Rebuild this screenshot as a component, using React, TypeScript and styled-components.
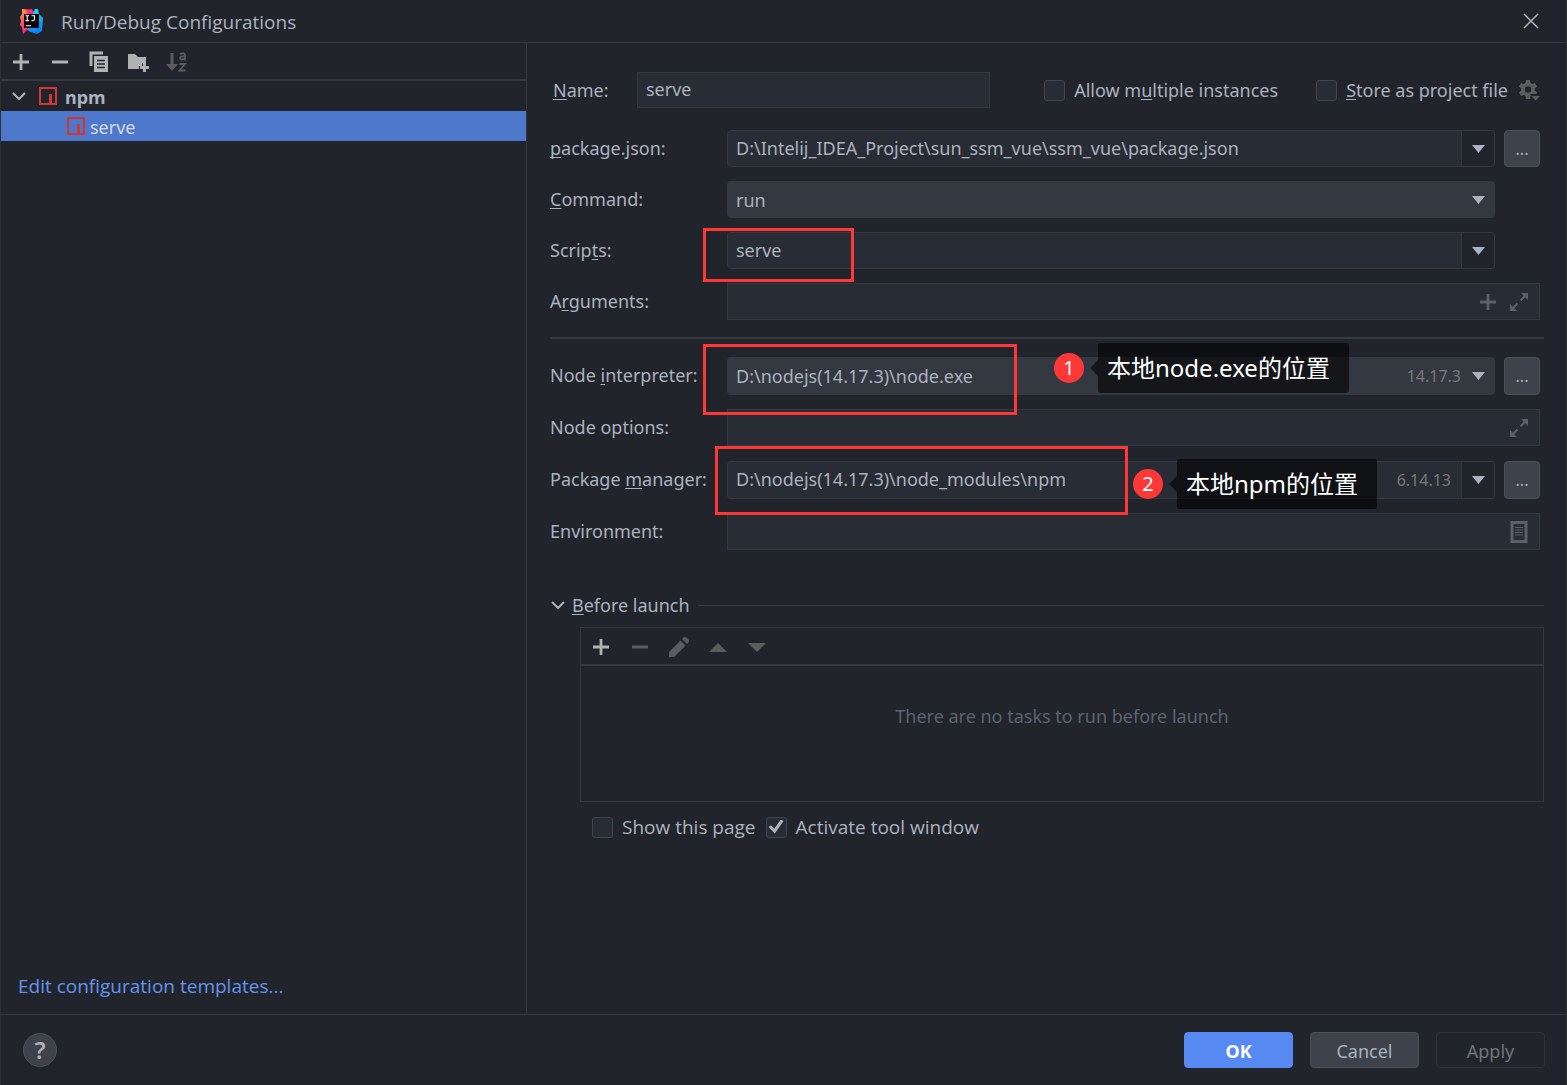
import React from "react";
import styled, { createGlobalStyle, css } from "styled-components";

const color = {
  bg: "#21252b",
  field: "#282c34",
  line: "#333841",
  raised: "#333841",
  button: "#3d424b",
  buttonLine: "#4a4f59",
  text: "#abb2bf",
  muted: "#5c6370",
  disabled: "#5a5c5f",
  icon: "#afb1b3",
  selected: "#4d78cc",
  primary: "#568af2",
  link: "#6494ed",
  mark: "#fe3837",
};

const GlobalStyle = createGlobalStyle`
  *, *::before, *::after { box-sizing: border-box; }
  body { margin: 0; background: ${color.bg}; }
  body, button, input, select {
    font-family: "Noto Sans", "Noto Sans CJK SC", sans-serif;
    font-size: 18px;
    line-height: 24px;
    color: ${color.text};
  }
  button, input, select { margin: 0; }
  svg { display: block; flex: none; }
`;

const largeText = css`
  font-family: "Open Sans", "Noto Sans CJK SC", sans-serif;
  font-size: 19px;
`;

const Dialog = styled.div`
  display: flex;
  flex-direction: column;
  min-height: 100vh;
  background: ${color.bg};
  border: 1px solid #2d2f33;
  border-width: 0 1px;
`;

const TitleBar = styled.header`
  display: flex;
  align-items: center;
  height: 43px;
  padding: 0 23px 0 16px;
  border-bottom: 1px solid ${color.line};
`;

const Title = styled.h1`
  ${largeText}
  flex: 1;
  margin: 0 0 0 16px;
  padding-top: 2px;
  font-weight: 400;
`;

const IconButton = styled.button<{ $size?: number }>`
  display: flex;
  align-items: center;
  justify-content: center;
  width: ${(p) => p.$size ?? 24}px;
  height: ${(p) => p.$size ?? 24}px;
  padding: 0;
  border: 0;
  background: none;
  color: ${color.icon};
  &:disabled { color: ${color.disabled}; }
`;

const Body = styled.main`
  display: grid;
  grid-template-columns: minmax(280px, 526px) minmax(0, 1fr);
  flex: 1;
`;

const Sidebar = styled.aside`
  display: flex;
  flex-direction: column;
  border-right: 1px solid ${color.line};
`;

const Toolbar = styled.div`
  display: flex;
  align-items: center;
  gap: 15px;
  height: 38px;
  padding: 2px 8px 0;
  border-bottom: 2px solid ${color.line};
`;

const Tree = styled.ul`
  flex: 1;
  margin: 0;
  padding: 0;
  list-style: none;
`;

const TreeRow = styled.li<{ $selected?: boolean; $level: number }>`
  display: flex;
  align-items: center;
  gap: ${(p) => (p.$level ? 5 : 8)}px;
  height: 30px;
  padding-left: ${(p) => (p.$level ? 66 : 5)}px;
  font-weight: ${(p) => (p.$level ? 400 : 700)};
  color: ${(p) => (p.$selected ? "#d7dae0" : color.text)};
  background: ${(p) => (p.$selected ? color.selected : "transparent")};
`;

const TreeText = styled.span`
  padding-top: 2px;
`;

const TemplatesLink = styled.a`
  ${largeText}
  padding: 0 17px 16px;
  color: ${color.link};
  text-decoration: none;
`;

const Editor = styled.section`
  padding: 29px 22px 24px 23px;
`;

const NameRow = styled.div`
  display: flex;
  align-items: center;
  height: 36px;
  margin-bottom: 22px;
  padding: 0 4px 0 3px;
`;

const NameLabel = styled.label`
  width: 84px;
`;

const NameInput = styled.input`
  flex: 1;
  min-width: 0;
  height: 36px;
  margin-right: 54px;
  padding: 0 8px 2px;
  border: 1px solid ${color.line};
  background: ${color.field};
  outline: 0;
`;

const Mnemonic = styled.u`
  text-underline-offset: 2px;
  text-decoration-thickness: 1px;
  text-decoration-skip-ink: none;
`;

const Check = styled.label<{ $large?: boolean }>`
  ${(p) => p.$large && largeText}
  display: inline-flex;
  align-items: center;
  gap: 9px;
  white-space: nowrap;
`;

const CheckBox = styled.input`
  appearance: none;
  display: grid;
  place-content: center;
  flex: none;
  width: 21px;
  height: 21px;
  border: 1px solid #3f4653;
  border-radius: 3px;
  background: ${color.field};
  &:checked::before {
    content: "";
    width: 15px;
    height: 15px;
    background: ${color.text};
    clip-path: polygon(0 50%, 16% 38%, 38% 62%, 82% 0, 100% 10%, 42% 94%);
  }
`;

const StoreGroup = styled.div`
  display: flex;
  align-items: center;
  gap: 10px;
  margin-left: 38px;
`;

const Rows = styled.div<{ $rowHeight: number }>`
  display: grid;
  grid-auto-rows: ${(p) => p.$rowHeight}px;
  row-gap: 14px;
  padding-right: 4px;
`;

const Row = styled.div`
  display: grid;
  grid-template-columns: 177px minmax(0, 1fr) 36px;
  align-items: stretch;
`;

const RowLabel = styled.label`
  align-self: center;
  padding-bottom: 2px;
  white-space: nowrap;
`;

const Cell = styled.div<{ $wide?: boolean }>`
  position: relative;
  display: flex;
  grid-column: ${(p) => (p.$wide ? "2 / 4" : "2")};
  margin-right: ${(p) => (p.$wide ? 0 : 9)}px;
`;

const Frame = styled.div<{ $square?: boolean; $raised?: boolean }>`
  display: flex;
  flex: 1;
  align-items: center;
  height: ${(p) => (p.$square ? "37px" : "auto")};
  min-width: 0;
  overflow: hidden;
  border: 1px solid ${color.line};
  border-radius: ${(p) => (p.$square ? 0 : 4)}px;
  background: ${(p) => (p.$raised ? color.raised : color.field)};
`;

const Text = styled.input`
  flex: 1;
  min-width: 0;
  align-self: stretch;
  padding: 0 8px 2px;
  border: 0;
  background: none;
  outline: 0;
`;

const Select = styled.select`
  appearance: none;
  flex: 1;
  min-width: 0;
  align-self: stretch;
  padding: 0 8px;
  border: 0;
  background: none;
  outline: 0;
`;

const Version = styled.span<{ $tight?: boolean }>`
  padding-right: ${(p) => (p.$tight ? 0 : 10)}px;
  font-size: 16px;
  color: #787878;
`;

const DropButton = styled.button<{ $plain?: boolean }>`
  display: flex;
  align-items: center;
  justify-content: center;
  align-self: stretch;
  width: 33px;
  padding: 0;
  border: 0;
  border-left: 1px solid ${(p) => (p.$plain ? "transparent" : color.line)};
  background: ${(p) => (p.$plain ? "none" : color.bg)};
`;

const FieldIcons = styled.div`
  display: flex;
  gap: 7px;
  padding-right: 8px;
`;

const FieldIcon = styled(IconButton)`
  color: #5a6169;
`;

const Browse = styled.button`
  padding: 0;
  border: 1px solid ${color.buttonLine};
  border-radius: 4px;
  background: ${color.button};
  font-size: 16px;
`;

const Divider = styled.hr`
  height: 2px;
  margin: 17px 0 18px;
  border: 0;
  background: ${color.line};
`;

const Marker = styled.div<{ $x: number; $y: number; $w: number; $h: number }>`
  position: absolute;
  z-index: 2;
  left: ${(p) => p.$x}px;
  top: ${(p) => p.$y}px;
  width: ${(p) => p.$w}px;
  height: ${(p) => p.$h}px;
  border: 3px solid ${color.mark};
  pointer-events: none;
`;

const Callout = styled.div<{ $x: number; $y: number }>`
  position: absolute;
  z-index: 2;
  left: ${(p) => p.$x}px;
  top: ${(p) => p.$y}px;
  display: flex;
  align-items: center;
  height: 50px;
  white-space: nowrap;
`;

const Badge = styled.span`
  width: 30px;
  height: 30px;
  margin-right: 6px;
  border-radius: 50%;
  background: ${color.mark};
  color: #fff;
  font-size: 20px;
  line-height: 29px;
  text-align: center;
`;

const Pointer = styled.span`
  width: 8px;
  height: 16px;
  background: rgba(0, 0, 0, 0.6);
  clip-path: polygon(100% 0, 100% 100%, 0 50%);
`;

const Tip = styled.span`
  height: 50px;
  padding: 0 19px 0 9px;
  border-radius: 3px;
  background: rgba(0, 0, 0, 0.6);
  color: #fff;
  font-size: 24px;
  line-height: 50px;
`;

const LaunchHead = styled.h2`
  display: flex;
  align-items: center;
  gap: 8px;
  margin: 42px 0 10px;
  font-size: 18px;
  font-weight: 400;
  &::after {
    content: "";
    flex: 1;
    height: 1px;
    background: ${color.line};
  }
`;

const FoldButton = styled.button`
  display: flex;
  align-items: center;
  gap: 6px;
  padding: 0;
  border: 0;
  background: none;
`;

const TaskPanel = styled.div`
  display: flex;
  flex-direction: column;
  height: 175px;
  margin-left: 30px;
  border: 1px solid ${color.line};
`;

const EmptyNote = styled.p`
  margin: 38px 0 0;
  text-align: center;
  color: ${color.muted};
`;

const Options = styled.div`
  display: flex;
  gap: 10px;
  margin: 13px 0 0 42px;
`;

const Footer = styled.footer`
  display: flex;
  align-items: center;
  gap: 17px;
  height: 71px;
  padding: 0 21px 0 22px;
  border-top: 1px solid ${color.line};
`;

const Help = styled.button`
  width: 34px;
  height: 34px;
  margin-right: auto;
  padding: 0;
  border: 1px solid ${color.buttonLine};
  border-radius: 50%;
  background: ${color.button};
  color: ${color.icon};
  font-size: 24px;
  font-weight: 600;
  line-height: 32px;
`;

const Action = styled.button<{ $primary?: boolean }>`
  width: 109px;
  height: 36px;
  padding: 2px 0 0;
  border: 1px solid ${(p) => (p.$primary ? color.primary : color.buttonLine)};
  border-radius: 4px;
  background: ${(p) => (p.$primary ? color.primary : color.button)};
  color: ${(p) => (p.$primary ? "#fff" : color.text)};
  font-weight: ${(p) => (p.$primary ? 700 : 400)};
  &:disabled {
    border-color: #2f3338;
    background: none;
    color: #727375;
  }
`;

const Logo = () => (
  <svg width="28" height="28" viewBox="0 0 28 28" aria-hidden="true">
    <defs>
      <linearGradient id="warm" x1="0" y1="0" x2="0.3" y2="1">
        <stop offset="0" stopColor="#ffb02e" />
        <stop offset="0.45" stopColor="#fc5f5f" />
        <stop offset="1" stopColor="#fe2283" />
      </linearGradient>
      <linearGradient id="cool" x1="0.4" y1="0" x2="0.6" y2="1">
        <stop offset="0" stopColor="#1fd3f5" />
        <stop offset="1" stopColor="#087cfa" />
      </linearGradient>
    </defs>
    <path d="M5 2l9 1v21l-4-1-4 4-1-7-2-2 1-4-1-4 2-3z" fill="url(#warm)" />
    <path d="M9 3l6-1 2 4-6 3z" fill="#fe2d78" />
    <path d="M18 2l3 0 1 5 4 4-1 13-5 3-9-3 3-14z" fill="url(#cool)" />
    <rect x="7" y="7" width="15" height="14" fill="#0b0608" />
    <path d="M8.500 8.800h3.500M10.200 8.800v5M8.500 13.600h3.500M14.500 8.800h3v3.200q0 1.600-1.600 1.600h-1.400M9 18.700h5" fill="none" stroke="#fff" strokeWidth="1.100" />
  </svg>
);

const CloseIcon = () => (
  <svg width="16" height="16" viewBox="0 0 16 16" aria-hidden="true">
    <path d="M1 1l14 14M15 1L1 15" stroke="#b4b4b0" strokeWidth="1.500" />
  </svg>
);

const PlusIcon = () => (
  <svg width="16" height="16" viewBox="0 0 16 16" aria-hidden="true">
    <path d="M8 0v16M0 8h16" stroke="currentColor" strokeWidth="2.800" />
  </svg>
);

const MinusIcon = () => (
  <svg width="16" height="16" viewBox="0 0 16 16" aria-hidden="true">
    <path d="M0 8h16" stroke="currentColor" strokeWidth="3" />
  </svg>
);

const CopyIcon = () => (
  <svg width="20" height="22" viewBox="0 0 20 22" aria-hidden="true">
    <path d="M2 15V2h12" fill="none" stroke="currentColor" strokeWidth="3" />
    <path d="M5 5h14v16H5z" fill="currentColor" />
    <path d="M8 9.500h8M8 13h8M8 16.500h8" stroke={color.bg} strokeWidth="1.400" />
  </svg>
);

const FolderIcon = () => (
  <svg width="22" height="22" viewBox="0 0 22 22" aria-hidden="true">
    <path d="M1 3h7l3 3h8v6h-4v3h-3v3H1z" fill="currentColor" />
    <path d="M17.500 12v9M13 16.500h9" stroke="currentColor" strokeWidth="3" />
  </svg>
);

const SortIcon = () => (
  <svg width="22" height="22" viewBox="0 0 22 22" aria-hidden="true">
    <path d="M6 2v13" stroke="currentColor" strokeWidth="3" />
    <path d="M0 13h12l-6 7z" fill="currentColor" />
    <path d="M14 3q5-2 5 1.500v5M19 5.500q-5-0.500-5 1.500t2.500 1.500q2-0.200 2.500-1.500M13.500 13h5.500l-5.500 6.500h6" fill="none" stroke="currentColor" strokeWidth="1.800" />
  </svg>
);

const FoldIcon = () => (
  <svg width="16" height="16" viewBox="0 0 16 16" aria-hidden="true">
    <path d="M2 5l6 6 6-6" fill="none" stroke={color.icon} strokeWidth="2" />
  </svg>
);

const NpmIcon = () => (
  <svg width="18" height="18" viewBox="0 0 18 18" aria-hidden="true">
    <path d="M1 1h16v16H1z" fill="none" stroke="#cb3837" strokeWidth="2" />
    <path d="M10 7h3v9h-3z" fill="#cb3837" />
  </svg>
);

const Triangle = ({ up, wide }: { up?: boolean; wide?: boolean }) => (
  <svg width={wide ? 18 : 13} height={wide ? 9 : 8} viewBox="0 0 14 9" preserveAspectRatio="none" aria-hidden="true">
    <path d={up ? "M0 9h14L7 0z" : "M0 0h14L7 9z"} fill={wide ? "currentColor" : color.text} />
  </svg>
);

const PencilIcon = () => (
  <svg width="20" height="20" viewBox="0 0 20 20" aria-hidden="true">
    <path d="M0 15L11.500 3.500l5 5L5 20H0zM13 2l1.500-1.500q1.500-1 3 0l2 2q1 1.500 0 3L18 7z" fill="currentColor" />
  </svg>
);

const ExpandIcon = () => (
  <svg width="18" height="18" viewBox="0 0 18 18" aria-hidden="true">
    <path d="M11 0h7v7zM0 11l7 7H0z" fill="currentColor" />
    <path d="M10.500 7.500L15 3M7.500 10.500L3 15" stroke="currentColor" strokeWidth="2" />
  </svg>
);

const ListIcon = () => (
  <svg width="18" height="22" viewBox="0 0 18 22" aria-hidden="true">
    <path d="M2 1.500h14v19H2z" fill="none" stroke="currentColor" strokeWidth="3" />
    <path d="M5 6.500h8M5 9h8M5 11.500h8M5 14h8" stroke="currentColor" strokeWidth="1.200" />
  </svg>
);

const GearIcon = () => (
  <svg width="22" height="22" viewBox="0 0 22 22" aria-hidden="true">
    <path
      d="M8 1h4l.5 3 1.800 1 2.700-1 2 3.400L16.700 9.500v2L19 13.600 17 17l-2.700-1-1.800 1L12 20H8l-.5-3-1.800-1L3 17l-2-3.400L3.300 11.500v-2L1 7.400 3 4l2.700 1 1.800-1z"
      fill="#5d5e5c"
    />
    <circle cx="10" cy="10.500" r="3.200" fill={color.bg} />
    <path d="M12 15h10v7h-6z" fill={color.bg} />
    <path d="M13.500 17H22l-4.200 4.500z" fill="#5d5e5c" />
  </svg>
);

type ComboProps = { id: string; value: string; version?: string };

const EditableCombo = ({ id, value, version }: ComboProps) => (
  <Frame>
    <Text id={id} defaultValue={value} />
    {version && <Version>{version}</Version>}
    <DropButton aria-label="Show choices">
      <Triangle />
    </DropButton>
  </Frame>
);

const FixedCombo = ({ id, value, version }: ComboProps) => (
  <Frame $raised>
    <Select id={id} defaultValue={value}>
      <option>{value}</option>
    </Select>
    {version && <Version $tight>{version}</Version>}
    <DropButton $plain aria-label="Show choices">
      <Triangle />
    </DropButton>
  </Frame>
);

const Note = ({ n, x, y, children }: { n: number; x: number; y: number; children: React.ReactNode }) => (
  <Callout $x={x} $y={y}>
    <Badge>{n}</Badge>
    <Pointer />
    <Tip>{children}</Tip>
  </Callout>
);

export default function App() {
  return (
    <>
      <GlobalStyle />
      <Dialog>
        <TitleBar>
          <Logo />
          <Title>Run/Debug Configurations</Title>
          <IconButton aria-label="Close"><CloseIcon /></IconButton>
        </TitleBar>

        <Body>
          <Sidebar>
            <Toolbar>
              <IconButton aria-label="Add"><PlusIcon /></IconButton>
              <IconButton aria-label="Remove"><MinusIcon /></IconButton>
              <IconButton aria-label="Copy"><CopyIcon /></IconButton>
              <IconButton aria-label="New folder"><FolderIcon /></IconButton>
              <IconButton aria-label="Sort" disabled><SortIcon /></IconButton>
            </Toolbar>
            <Tree>
              <TreeRow $level={0}>
                <IconButton $size={25} aria-label="Collapse npm"><FoldIcon /></IconButton>
                <NpmIcon />
                <TreeText>npm</TreeText>
              </TreeRow>
              <TreeRow $level={1} $selected>
                <NpmIcon />
                <TreeText>serve</TreeText>
              </TreeRow>
            </Tree>
            <TemplatesLink href="#templates">Edit configuration templates...</TemplatesLink>
          </Sidebar>

          <Editor>
            <NameRow>
              <NameLabel htmlFor="name"><Mnemonic>N</Mnemonic>ame:</NameLabel>
              <NameInput id="name" defaultValue="serve" />
              <Check>
                <CheckBox type="checkbox" />
                <span>Allow m<Mnemonic>u</Mnemonic>ltiple instances</span>
              </Check>
              <StoreGroup>
                <Check>
                  <CheckBox type="checkbox" />
                  <span><Mnemonic>S</Mnemonic>tore as project file</span>
                </Check>
                <IconButton $size={22} aria-label="Storage options"><GearIcon /></IconButton>
              </StoreGroup>
            </NameRow>

            <Rows $rowHeight={37}>
              <Row>
                <RowLabel htmlFor="package"><Mnemonic>p</Mnemonic>ackage.json:</RowLabel>
                <Cell>
                  <EditableCombo id="package" value="D:\Intelij_IDEA_Project\sun_ssm_vue\ssm_vue\package.json" />
                </Cell>
                <Browse>...</Browse>
              </Row>
              <Row>
                <RowLabel htmlFor="command"><Mnemonic>C</Mnemonic>ommand:</RowLabel>
                <Cell><FixedCombo id="command" value="run" /></Cell>
              </Row>
              <Row>
                <RowLabel htmlFor="scripts">Scrip<Mnemonic>t</Mnemonic>s:</RowLabel>
                <Cell>
                  <EditableCombo id="scripts" value="serve" />
                  <Marker $x={-24} $y={-4} $w={151} $h={54} />
                </Cell>
              </Row>
              <Row>
                <RowLabel htmlFor="arguments">A<Mnemonic>r</Mnemonic>guments:</RowLabel>
                <Cell $wide>
                  <Frame $square>
                    <Text id="arguments" />
                    <FieldIcons>
                      <FieldIcon aria-label="Insert macro"><PlusIcon /></FieldIcon>
                      <FieldIcon aria-label="Expand arguments"><ExpandIcon /></FieldIcon>
                    </FieldIcons>
                  </Frame>
                </Cell>
              </Row>
            </Rows>

            <Divider />

            <Rows $rowHeight={38}>
              <Row>
                <RowLabel htmlFor="node">Node <Mnemonic>i</Mnemonic>nterpreter:</RowLabel>
                <Cell>
                  <FixedCombo id="node" value="D:\nodejs(14.17.3)\node.exe" version="14.17.3" />
                  <Marker $x={-24} $y={-13} $w={314} $h={71} />
                  <Note n={1} x={327} y={-14}>本地node.exe的位置</Note>
                </Cell>
                <Browse>...</Browse>
              </Row>
              <Row>
                <RowLabel htmlFor="options">Node options:</RowLabel>
                <Cell $wide>
                  <Frame $square>
                    <Text id="options" />
                    <FieldIcons>
                      <FieldIcon aria-label="Expand node options"><ExpandIcon /></FieldIcon>
                    </FieldIcons>
                  </Frame>
                </Cell>
              </Row>
              <Row>
                <RowLabel htmlFor="manager">Package <Mnemonic>m</Mnemonic>anager:</RowLabel>
                <Cell>
                  <EditableCombo id="manager" value="D:\nodejs(14.17.3)\node_modules\npm" version="6.14.13" />
                  <Marker $x={-12} $y={-15} $w={413} $h={69} />
                  <Note n={2} x={406} y={-2}>本地npm的位置</Note>
                </Cell>
                <Browse>...</Browse>
              </Row>
              <Row>
                <RowLabel htmlFor="environment">Environment:</RowLabel>
                <Cell $wide>
                  <Frame $square>
                    <Text id="environment" />
                    <FieldIcons>
                      <FieldIcon aria-label="Edit environment variables"><ListIcon /></FieldIcon>
                    </FieldIcons>
                  </Frame>
                </Cell>
              </Row>
            </Rows>

            <LaunchHead>
              <FoldButton>
                <FoldIcon />
                <span><Mnemonic>B</Mnemonic>efore launch</span>
              </FoldButton>
            </LaunchHead>
            <TaskPanel>
              <Toolbar>
                <IconButton aria-label="Add task"><PlusIcon /></IconButton>
                <IconButton aria-label="Remove task" disabled><MinusIcon /></IconButton>
                <IconButton aria-label="Edit task" disabled><PencilIcon /></IconButton>
                <IconButton aria-label="Move up" disabled><Triangle up wide /></IconButton>
                <IconButton aria-label="Move down" disabled><Triangle wide /></IconButton>
              </Toolbar>
              <EmptyNote>There are no tasks to run before launch</EmptyNote>
            </TaskPanel>
            <Options>
              <Check $large><CheckBox type="checkbox" />Show this page</Check>
              <Check $large><CheckBox type="checkbox" defaultChecked />Activate tool window</Check>
            </Options>
          </Editor>
        </Body>

        <Footer>
          <Help aria-label="Help">?</Help>
          <Action $primary>OK</Action>
          <Action>Cancel</Action>
          <Action disabled>Apply</Action>
        </Footer>
      </Dialog>
    </>
  );
}
